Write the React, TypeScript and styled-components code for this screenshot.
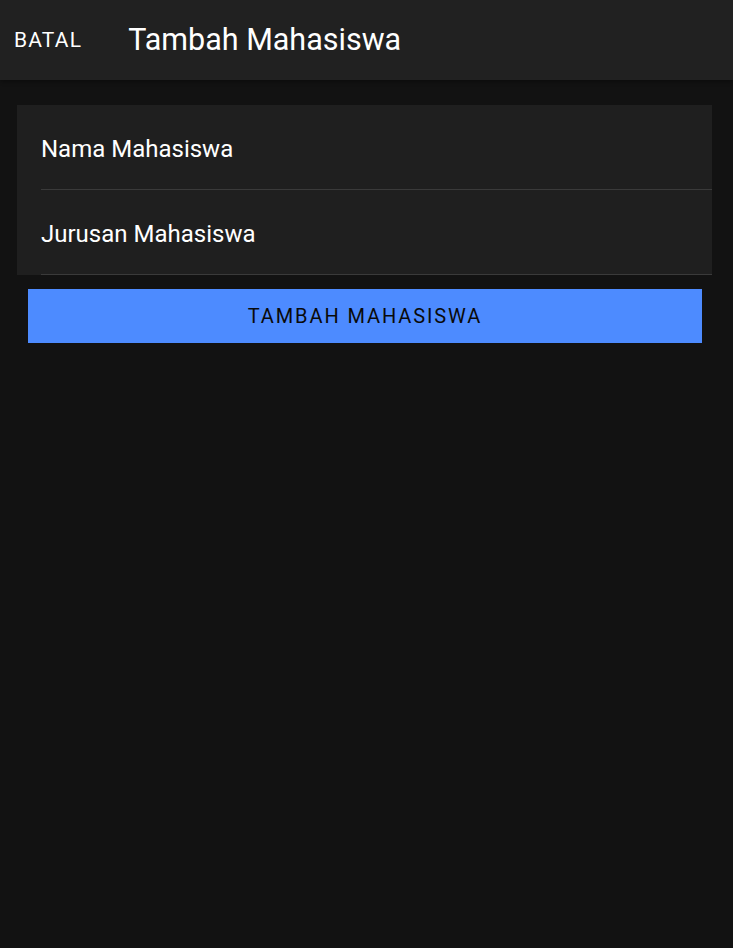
import React from "react";
import styled, { createGlobalStyle } from "styled-components";

const Global = createGlobalStyle`
  html, body { margin: 0; padding: 0; background: #121212; }
  body { font-family: Roboto, "Noto Sans", sans-serif; min-height: 948px; }
`;

const Page = styled.div`
  min-height: 948px;
  background: #121212;
  display: flex;
  flex-direction: column;
`;

const Toolbar = styled.header`
  height: 80px;
  background: #212121;
  display: flex;
  align-items: center;
  box-shadow: 0 2px 4px rgba(0, 0, 0, 0.3);
`;

const CancelButton = styled.button`
  background: none;
  border: none;
  color: #ffffff;
  font-family: Roboto, sans-serif;
  font-size: 21px;
  letter-spacing: 1.2px;
  text-transform: uppercase;
  padding: 0 0 0 14px;
  margin-right: 46px;
  cursor: pointer;
`;

const Title = styled.h1`
  margin: 0 0 1px;
  color: #ffffff;
  font-family: Roboto, sans-serif;
  font-weight: 400;
  font-size: 30.5px;
`;

const Content = styled.main`
  padding: 25px 21px 0 17px;
  display: flex;
  flex-direction: column;
`;

const List = styled.div`
  background: #1f1f1f;
  display: flex;
  flex-direction: column;
`;

const Field = styled.input`
  margin-left: 24px;
  padding: 4px 0 0;
  box-sizing: border-box;
  height: 85px;
  background: transparent;
  border: none;
  border-bottom: 1px solid #3a3a3a;
  color: #ffffff;
  font-family: Roboto, sans-serif;
  font-size: 24px;
  outline: none;
  &::placeholder { color: #ffffff; opacity: 1; }
`;

const SubmitButton = styled.button`
  margin: 14px 10px 0 11px;
  height: 54px;
  background: #4d8bff;
  border: none;
  color: #0a0a0a;
  font-family: Roboto, sans-serif;
  font-size: 20px;
  letter-spacing: 1.9px;
  text-transform: uppercase;
  cursor: pointer;
`;

export default function App() {
  return (
    <>
      <Global />
      <Page>
        <Toolbar>
          <CancelButton>Batal</CancelButton>
          <Title>Tambah Mahasiswa</Title>
        </Toolbar>
        <Content>
          <List>
            <Field placeholder="Nama Mahasiswa" />
            <Field placeholder="Jurusan Mahasiswa" />
          </List>
          <SubmitButton>Tambah Mahasiswa</SubmitButton>
        </Content>
      </Page>
    </>
  );
}
